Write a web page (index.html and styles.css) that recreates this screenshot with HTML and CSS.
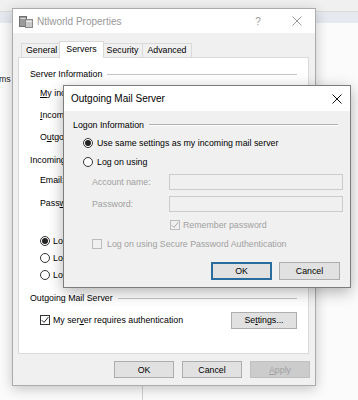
FILE: index.html
```html
<!DOCTYPE html>
<html>
<head>
<meta charset="utf-8">
<title>Ntlworld Properties</title>
<link rel="stylesheet" href="styles.css">
</head>
<body>
<div class="desk">
  <div class="bg">
    <div class="bg-bar"></div>
    <div class="bg-sel"></div>
    <div class="bg-text">ms</div>
  </div>
  <div class="bg-line"></div>

  <div class="win main">
    <div class="title">
      <svg class="app-ico" width="14" height="13" viewBox="0 0 14 13">
        <rect x="0.5" y="1.5" width="7" height="10" fill="#9a9a9a" stroke="#6f6f6f"/>
        <rect x="1.5" y="3" width="5" height="1" fill="#d8d8d8"/>
        <rect x="6.5" y="4.5" width="7" height="8" fill="#c8c8c8" stroke="#8a8a8a"/>
        <rect x="7.5" y="6" width="5" height="1" fill="#eeeeee"/>
      </svg>
      <span class="title-text">Ntlworld Properties</span>
      <span class="cap help">?</span>
      <span class="cap close">
        <svg width="10" height="10" viewBox="0 0 10 10"><path d="M0.5 0.5L9.5 9.5M9.5 0.5L0.5 9.5" stroke="#9a9a9a" stroke-width="1" fill="none"/></svg>
      </span>
    </div>
    <div class="mbody">
      <div class="tabs">
        <div class="tab">General</div>
        <div class="tab sel">Servers</div>
        <div class="tab">Security</div>
        <div class="tab">Advanced</div>
      </div>
      <div class="panel">
        <div class="ghead"><span>Server Information</span><i class="gline"></i></div>
        <div class="frow ind under"><span><u>M</u>y incoming mail server</span></div>
        <div class="frow ind under"><span><u>I</u>ncoming mail</span></div>
        <div class="frow ind under"><span>O<u>u</u>tgoing mail</span></div>
        <div class="ghead under wide"><span>Incoming Mail Server</span></div>
        <div class="frow cred ind under"><span>Email:</span></div>
        <div class="frow cred ind under"><span>Pass<u>w</u>ord:</span></div>
        <div class="remrow"></div>
        <div class="rrow ind under"><span class="radio on"></span><span>Log on</span></div>
        <div class="rrow ind under"><span class="radio"></span><span>Log on</span></div>
        <div class="rrow ind under"><span class="radio"></span><span>Log on</span></div>
        <div class="ghead sp"><span>Outgoing Mail Server</span><i class="gline"></i></div>
        <div class="crow ind">
          <span class="chk"><span class="cb">
            <svg width="8" height="8" viewBox="0 0 8 8"><path d="M0.8 4.2L3 6.4L7.3 1.2" stroke="#222" stroke-width="1" fill="none"/></svg>
          </span><span>My ser<u>v</u>er requires authentication</span></span>
          <button class="btn set">Se<u>t</u>tings...</button>
        </div>
      </div>
      <div class="mbtns">
        <button class="btn">OK</button>
        <button class="btn">Cancel</button>
        <button class="btn dis"><u>A</u>pply</button>
      </div>
    </div>
  </div>

  <div class="win sub">
    <div class="title">
      <span class="title-text">Outgoing Mail Server</span>
      <span class="cap close">
        <svg width="10" height="10" viewBox="0 0 10 10"><path d="M0.5 0.5L9.5 9.5M9.5 0.5L0.5 9.5" stroke="#111" stroke-width="1" fill="none"/></svg>
      </span>
    </div>
    <div class="sbody">
      <div class="ghead"><span>Logon Information</span><i class="gline etched"></i></div>
      <div class="srow"><span class="radio on"></span><span>Use same settings as my incoming mail server</span></div>
      <div class="srow"><span class="radio"></span><span>Log on using</span></div>
      <div class="sfield"><span class="slabel">Account name:</span><span class="dbox"></span></div>
      <div class="sfield"><span class="slabel">Password:</span><span class="dbox"></span></div>
      <div class="srem"><span class="cb off">
        <svg width="8" height="8" viewBox="0 0 8 8"><path d="M0.8 4.2L3 6.4L7.3 1.2" stroke="#a8a8a8" stroke-width="1" fill="none"/></svg>
      </span><span>Remember password</span></div>
      <div class="sspa"><span class="cb off"></span><span>Log on using Secure Password Authentication</span></div>
      <div class="sbtns">
        <button class="btn def">OK</button>
        <button class="btn">Cancel</button>
      </div>
    </div>
  </div>
</div>
</body>
</html>
```

FILE: styles.css
```css
* { box-sizing: border-box; margin: 0; padding: 0; }
html, body { width: 358px; height: 400px; overflow: hidden; }
body {
  font-family: "Liberation Sans", Arial, sans-serif;
  font-size: 8.8px;
  color: #000;
  background: #fbfbfb;
}
u { text-decoration: underline; text-underline-offset: 1px; }
button { font: inherit; color: inherit; }

.desk { position: relative; width: 358px; height: 400px; overflow: hidden; background: #fbfbfb; }
.bg-bar { height: 12px; background: #f0f0f0; border-bottom: 1px solid #dadada; }
.bg-sel { height: 11px; background: #e6eaf0; }
.bg-text { margin-top: 50px; margin-left: -1px; line-height: 12px; color: #222; }
.bg-line { position: absolute; left: 142px; top: 386px; width: 1px; height: 14px; background: #d0d0d0; }

.win { position: absolute; display: flex; flex-direction: column; background: #f0f0f0; }
.main {
  left: 12px; top: 8px; width: 304px; height: 378px;
  border: 1px solid #ababab;
  box-shadow: 0 3px 12px rgba(0, 0, 0, 0.22);
}
.title { display: flex; align-items: center; background: #fff; flex: none; }
.main .title { height: 24px; padding-left: 6px; color: #999; }
.app-ico { flex: none; margin-right: 4px; }
.title-text { font-size: 10px; white-space: nowrap; }
.cap { display: flex; align-items: center; justify-content: center; height: 100%; flex: none; }
.help { margin-left: auto; width: 36px; margin-right: 3px; font-size: 10px; color: #9a9a9a; }
.main .close { width: 36px; }

.mbody { display: flex; flex-direction: column; padding: 8px 6px 0 5px; }
.tabs { display: flex; align-items: flex-end; height: 16px; padding-left: 3px; position: relative; z-index: 1; }
.tab {
  height: 14px; line-height: 13px; padding: 0 4px;
  border: 1px solid #d9d9d9; border-bottom: 0;
  background: #f0f0f0; margin-right: -1px; white-space: nowrap;
}
.tab.sel {
  height: 17px; line-height: 15px; background: #fff;
  margin: 0 -2px -1px -2px; padding: 0 6px; position: relative;
}

.panel {
  height: 297px; background: #fff; border: 1px solid #d9d9d9;
  padding: 4px 11px 0 11px; overflow: hidden; white-space: nowrap;
}
.ghead { display: flex; align-items: center; height: 16px; margin-top: 4px; }
.ghead.sp { margin-top: 7px; }
.gline { flex: 1; height: 1px; background: #c4c4c4; margin-left: 5px; }
.gline.etched { height: 2px; background: none; border-top: 1px solid #b0b0b0; border-bottom: 1px solid #fff; }
.ind { margin-left: 10px; }
/* rows that run under the "Outgoing Mail Server" window end at its left edge */
.under { width: 23px; overflow: hidden; }
.under.wide { width: 33px; }
.frow { display: flex; align-items: center; height: 22px; }
.frow.cred { height: 23px; }
.remrow { height: 18px; }
.rrow { display: flex; align-items: center; gap: 3px; height: 17px; }
.crow { display: flex; align-items: center; justify-content: space-between; height: 28px; }
.chk { display: flex; align-items: center; gap: 3px; }

.radio {
  width: 10px; height: 10px; border: 1px solid #333; border-radius: 50%;
  background: #fff; flex: none; display: flex; align-items: center; justify-content: center;
}
.radio.on::after { content: ""; width: 6px; height: 6px; border-radius: 50%; background: #222; }
.cb {
  width: 10px; height: 10px; border: 1px solid #333; background: #fff; flex: none;
  display: flex; align-items: center; justify-content: center;
}
.cb.off { border-color: #bcbcbc; background: #f0f0f0; }

.btn {
  height: 17px; width: 60px; background: #e1e1e1; border: 1px solid #adadad;
  display: flex; align-items: center; justify-content: center;
}
.btn.set { width: 66px; }
.btn.dis { background: #cccccc; border-color: #bfbfbf; color: #a0a0a0; }
.mbtns { display: flex; justify-content: flex-end; gap: 8px; margin-top: 7px; margin-right: -1px; }

.sub {
  left: 63px; top: 85px; width: 288px; height: 203px;
  border: 1px solid #7d7d7d;
  box-shadow: 0 4px 14px rgba(0, 0, 0, 0.3);
}
.sub .title { height: 25px; padding-left: 7px; }
.sub .close { width: 26px; margin-left: auto; }
.sbody { display: flex; flex-direction: column; padding: 2px 0 0 9px; white-space: nowrap; }
.sbody .ghead { margin-right: 12px; }
.srow { display: flex; align-items: center; gap: 4px; height: 19px; padding-left: 10px; }
.sfield { display: flex; align-items: center; height: 22px; padding-left: 19px; color: #a0a0a0; }
.slabel { width: 77px; flex: none; }
.dbox { width: 174px; height: 16px; border: 1px solid #cccccc; background: #f0f0f0; }
.srem { display: flex; align-items: center; gap: 3px; height: 20px; padding-left: 97px; color: #a0a0a0; }
.sspa { display: flex; align-items: center; gap: 5px; height: 17px; padding-left: 19px; color: #a0a0a0; }
.sbtns { display: flex; justify-content: flex-end; gap: 7px; margin-top: 10px; margin-right: 10px; }
.sbtns .btn { width: 61px; height: 18px; }
.btn.def { border: 2px solid #2a6c9e; }
```
